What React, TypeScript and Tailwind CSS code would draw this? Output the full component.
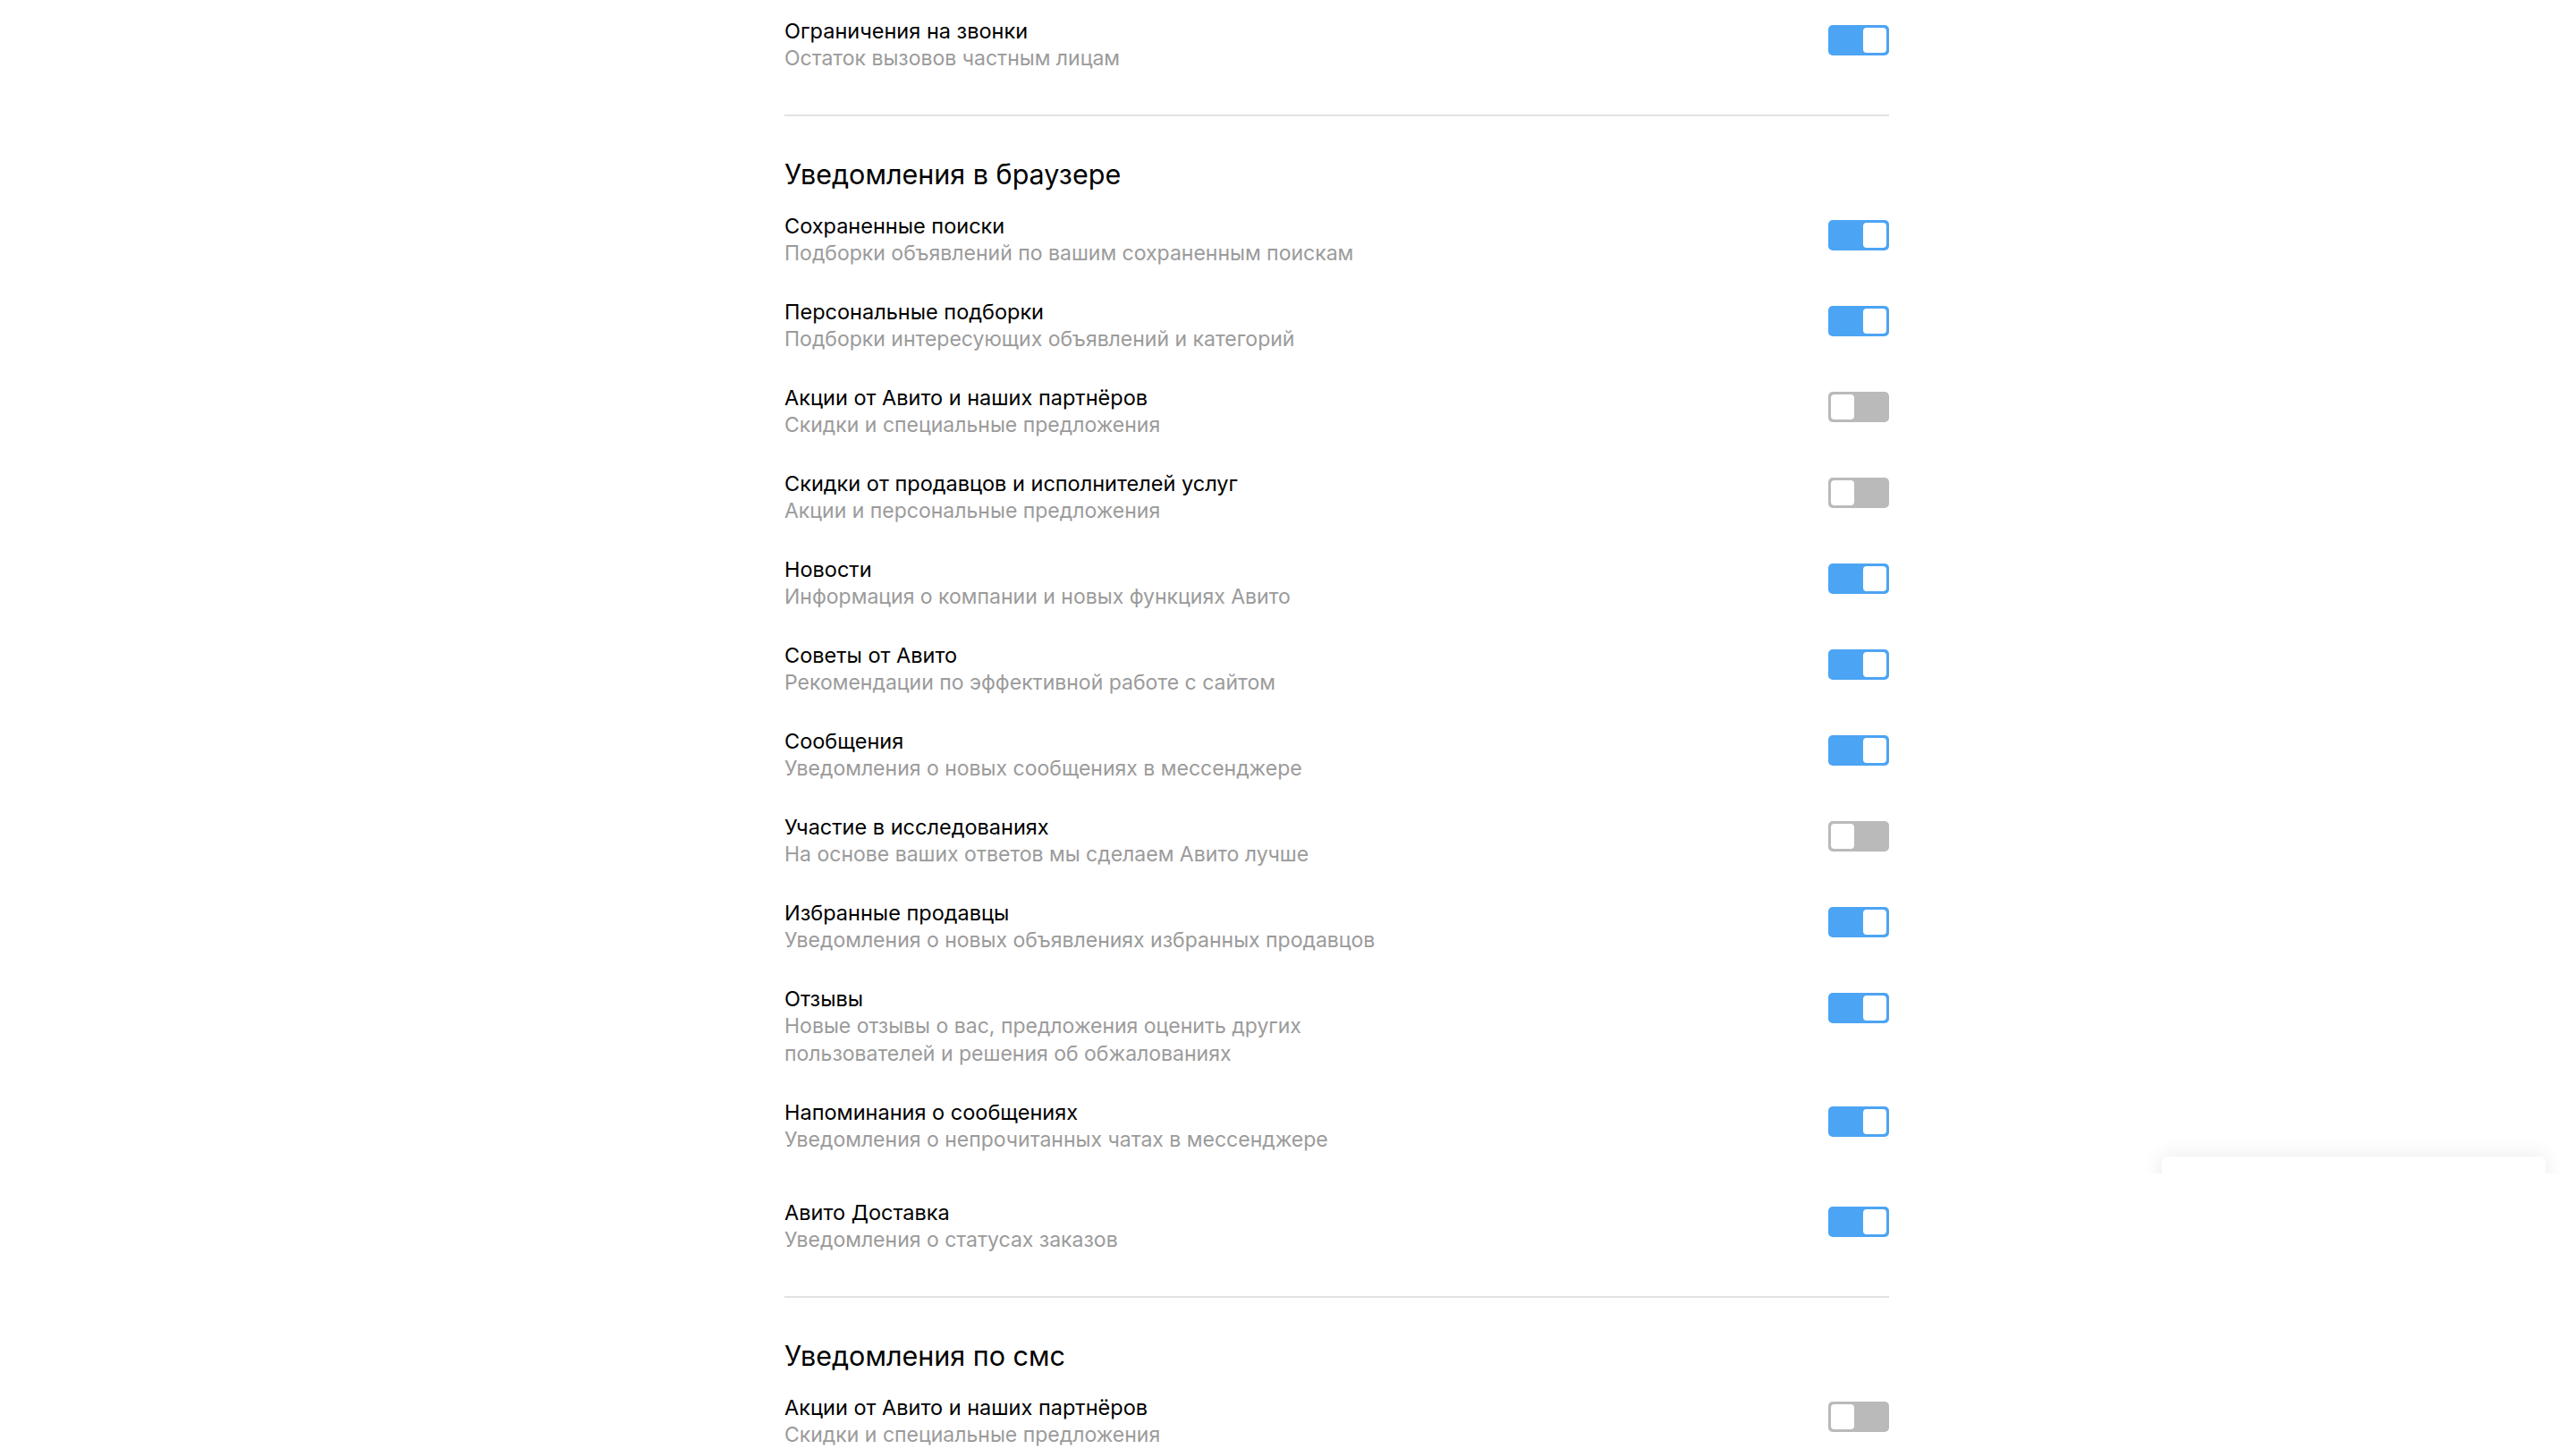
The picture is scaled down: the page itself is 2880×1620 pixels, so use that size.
import React from "react";

type Item = { title: string; desc: string[]; on: boolean };

const browserItems: Item[] = [
  { title: "Сохраненные поиски", desc: ["Подборки объявлений по вашим сохраненным поискам"], on: true },
  { title: "Персональные подборки", desc: ["Подборки интересующих объявлений и категорий"], on: true },
  { title: "Акции от Авито и наших партнёров", desc: ["Скидки и специальные предложения"], on: false },
  { title: "Скидки от продавцов и исполнителей услуг", desc: ["Акции и персональные предложения"], on: false },
  { title: "Новости", desc: ["Информация о компании и новых функциях Авито"], on: true },
  { title: "Советы от Авито", desc: ["Рекомендации по эффективной работе с сайтом"], on: true },
  { title: "Сообщения", desc: ["Уведомления о новых сообщениях в мессенджере"], on: true },
  { title: "Участие в исследованиях", desc: ["На основе ваших ответов мы сделаем Авито лучше"], on: false },
  { title: "Избранные продавцы", desc: ["Уведомления о новых объявлениях избранных продавцов"], on: true },
  {
    title: "Отзывы",
    desc: ["Новые отзывы о вас, предложения оценить других", "пользователей и решения об обжалованиях"],
    on: true,
  },
  { title: "Напоминания о сообщениях", desc: ["Уведомления о непрочитанных чатах в мессенджере"], on: true },
];

function Toggle({ on }: { on: boolean }) {
  return (
    <div
      className={`mt-[9px] flex h-[34px] w-[68px] shrink-0 rounded-[5px] p-[3px] ${
        on ? "justify-end bg-[#4ca4f4]" : "justify-start bg-[#bababa]"
      }`}
    >
      <div className="h-[28px] w-[26px] rounded-[4px] bg-white" />
    </div>
  );
}

function Row({ item, className = "" }: { item: Item; className?: string }) {
  return (
    <div className={`flex items-start justify-between ${className}`}>
      <div className="leading-[31px]">
        <div className="text-[23.5px] text-black">{item.title}</div>
        {item.desc.map((d) => (
          <div key={d} className="text-[23px] text-[#9b9b9b]">
            {d}
          </div>
        ))}
      </div>
      <Toggle on={item.on} />
    </div>
  );
}

function Divider() {
  return <div className="my-[47px] h-[2px] w-full bg-[#e2e2e2]" />;
}

function Heading({ children }: { children: React.ReactNode }) {
  return <h2 className="mb-[24px] text-[30.5px] leading-[36px] text-black">{children}</h2>;
}

export default function App() {
  return (
    <main
      className="relative h-[1620px] w-full overflow-hidden bg-white"
      style={{ fontFamily: "Inter, 'Noto Sans', sans-serif" }}
    >
      <div className="ml-[877px] w-[1235px] pt-[19px]">
        <Row item={{ title: "Ограничения на звонки", desc: ["Остаток вызовов частным лицам"], on: true }} />

        <Divider />

        <Heading>Уведомления в браузере</Heading>
        <div className="flex flex-col gap-[34px]">
          {browserItems.map((item) => (
            <Row key={item.title} item={item} />
          ))}
          <Row
            className="mt-[16px]"
            item={{ title: "Авито Доставка", desc: ["Уведомления о статусах заказов"], on: true }}
          />
        </div>

        <Divider />

        <Heading>Уведомления по смс</Heading>
        <Row item={{ title: "Акции от Авито и наших партнёров", desc: ["Скидки и специальные предложения"], on: false }} />
      </div>

      {/* floating card peeking in, cut off */}
      <div className="absolute left-[2380px] top-[1270px] h-[42px] w-[500px] overflow-hidden">
        <div className="ml-[37px] mt-[23px] h-[200px] w-[429px] rounded-t-[6px] bg-white shadow-[0_0_24px_rgba(0,0,0,0.09)]" />
      </div>
    </main>
  );
}
